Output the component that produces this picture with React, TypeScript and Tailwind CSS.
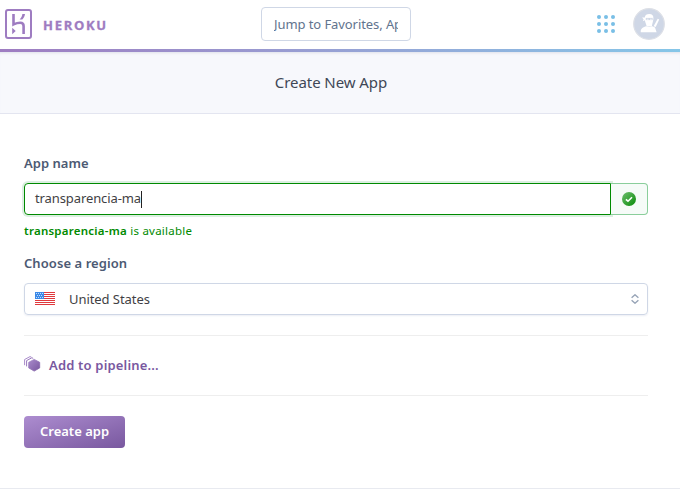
import React from "react";

const DOTS = [0, 1, 2, 3, 4, 5, 6, 7, 8];

function HerokuMark() {
  return (
    <svg width="27" height="30" viewBox="0 0 27 30" fill="none" stroke="#9e7cc1">
      <rect x="1" y="1" width="25" height="28" rx="2" strokeWidth="2" />
      <path d="M8.5 5V15.4C10.8 14.4 13.2 13.8 15.3 13.8C18 13.8 18.6 15.3 18.6 17V25" strokeWidth="2.6" />
      <path d="M7.2 18.7L10.7 21.9L7.2 25.2Z" fill="#9e7cc1" stroke="none" />
      <path d="M17.4 5H20C19.8 7 18.8 8.9 17.3 10.6H14.6C16.2 8.9 17.1 7.1 17.4 5Z" fill="#9e7cc1" stroke="none" />
    </svg>
  );
}

function Avatar() {
  return (
    <svg width="32" height="32" viewBox="0 0 32 32">
      <circle cx="16" cy="16" r="15.3" fill="#cfd7e6" stroke="#dcdfe6" strokeWidth="1.2" />
      <path d="M11.8 9.4C12.2 6.9 13.7 6 16.2 6C19.4 6 20.6 7.6 20.4 10.6C20.2 13.6 19.2 15.6 18.8 18.6H13.6C13.6 16.6 12.3 14.8 11.8 12.2L9.8 13.2L10.6 11.2L9 9.6Z" fill="#fff" />
      <path d="M12.8 9.9H19.6V12.1H12.8Z" fill="#cfd7e6" />
      <path d="M13.6 11.2H15.6M16.9 11.2H18.9" stroke="#fff" strokeWidth="0.8" />
      <path d="M7.8 24.3C7.4 20.7 9.4 19.4 13 18.2L16.2 19L19.4 18.2L22 19.6L23.6 24.3Z" fill="#fff" />
      <path d="M20.6 18.2L24.7 10.8L26.2 11.6L22.7 19.1Z" fill="#fff" />
    </svg>
  );
}

function Flag() {
  return (
    <svg width="20" height="13" viewBox="0 0 20 13">
      <rect width="20" height="13" rx="1" fill="#ffffff" />
      <path d="M0 0.5H20M0 2.5H20M0 4.5H20M0 6.5H20M0 8.5H20M0 10.5H20M0 12.5H20" stroke="#e0393e" strokeWidth="1.1" />
      <rect width="9" height="7" fill="#3c8ae8" />
      <path d="M1 1.5H8M2 3.5H8M1 5.5H8" stroke="#c5defa" strokeWidth="1" strokeDasharray="1 1" />
    </svg>
  );
}

function PipelineIcon() {
  return (
    <svg width="17" height="16" viewBox="0 0 17 16" fill="none">
      <defs>
        <linearGradient id="hex" x1="0" y1="0" x2="1" y2="1">
          <stop stopColor="#a98bcb" />
          <stop offset="1" stopColor="#79589f" />
        </linearGradient>
      </defs>
      <path d="M10.2 3.4L15.7 6.3V11.9L10.2 15.1L4.7 11.9V6.3Z" fill="url(#hex)" stroke="url(#hex)" strokeWidth="0.8" strokeLinejoin="round" />
      <path d="M0.6 9.2V3.5L6 0.6L7.4 1.2" stroke="#a98bcb" />
      <path d="M2.6 10.4V4.6L7.8 1.8L9.2 2.3" stroke="#9979bd" />
    </svg>
  );
}

export default function App() {
  return (
    <div className="h-[491px] w-[680px] overflow-hidden bg-white font-['Noto_Sans',sans-serif] text-[13px] text-[#3f3f44]">
      <header className="flex h-[49px] items-center pr-[15px] pb-px pl-[5px]">
        <div className="flex w-[256px] items-center gap-[11px]">
          <HerokuMark />
          <span className="pt-[3px] font-['Open_Sans',sans-serif] text-[13px] font-bold tracking-[1.7px] text-[#9e7cc1] [-webkit-text-stroke:0.3px_#9e7cc1]">
            HEROKU
          </span>
        </div>
        <div className="flex h-[34px] w-[150px] items-center rounded-[4px] border border-[#cfd7e6] px-3">
          <input
            className="w-full min-w-0 bg-transparent p-0 pt-0.5 text-[13px] tracking-[-0.08px] outline-none placeholder:text-[#62748e]"
            placeholder="Jump to Favorites, Apps"
          />
        </div>
        <div className="ml-auto flex items-center gap-[18px]">
          <div className="grid grid-cols-3 gap-[3px]">
            {DOTS.map((d) => (
              <span key={d} className="size-1 rounded-full bg-[#79bfe6]" />
            ))}
          </div>
          <Avatar />
        </div>
      </header>
      <div className="h-[3px] bg-linear-to-r from-[#9e7cc1] to-[#85c6e8]" />
      <div className="flex h-[62px] items-center justify-center border-b border-[#e3e5f0] bg-[#f7f8fc] pr-[18px] shadow-[inset_0_3px_3px_-2px_#dfe1e9]">
        <h1 className="text-[15px] tracking-[-0.07px] text-[#3f4756]">Create New App</h1>
      </div>

      <main className="mr-8 ml-6 flex flex-col pt-[39px]">
        <label className="h-5 text-[13px] leading-5 font-semibold tracking-[0.03px] text-[#4c5a73]">App name</label>
        <div className="mt-[10px] flex h-8">
          <div className="flex w-[587px] items-center rounded-l-[4px] border border-[#008a00] pl-[10px] shadow-[0_0_0_2px_#dcefe1]">
            <span className="tracking-[-0.1px]">transparencia-ma</span>
            <span className="h-[17px] w-px bg-[#222]" />
          </div>
          <div className="flex flex-1 items-center justify-center rounded-r-[4px] border border-l-0 border-[#8ace9b] bg-[#f6fbf8]">
            <svg width="14" height="14" viewBox="0 0 14 14">
              <defs>
                <linearGradient id="ok" x1="0" y1="0" x2="1" y2="1">
                  <stop stopColor="#6fbe6f" />
                  <stop offset="1" stopColor="#078a07" />
                </linearGradient>
              </defs>
              <circle cx="7" cy="7" r="7" fill="url(#ok)" />
              <path d="M3.9 7.3L6 9.2L10 5.3" fill="none" stroke="#fff" strokeWidth="1.6" />
            </svg>
          </div>
        </div>
        <p className="mt-[5px] h-5 text-[11.5px] leading-[21px] tracking-[0.24px] text-[#008a00]">
          <b className="font-semibold">transparencia-ma</b> is available
        </p>
        <label className="mt-[13px] h-5 text-[13px] leading-5 font-semibold tracking-[0.07px] text-[#4c5a73]">Choose a region</label>
        <div className="mt-[10px] flex h-8 items-center rounded-[4px] border border-[#cfd7e6] pr-2 pl-[10px] shadow-[0_1px_2px_#eceef4]">
          <span className="pb-px">
            <Flag />
          </span>
          <span className="ml-[14px] pt-px tracking-[-0.06px]">United States</span>
          <svg className="ml-auto" width="8" height="10" viewBox="0 0 8 10" fill="none" stroke="#96a3b6" strokeWidth="1.4">
            <path d="M0.6 3.8L4 0.8L7.4 3.8M0.6 6.2L4 9.2L7.4 6.2" />
          </svg>
        </div>
        <div className="mt-5 flex h-[61px] items-center gap-2 border-y border-[#eeeeee]">
          <span className="pb-1">
            <PipelineIcon />
          </span>
          <span className="font-semibold tracking-[0.18px] text-[#79589f]">Add to pipeline...</span>
        </div>
        <button className="mt-5 h-8 w-[101px] rounded-[4px] bg-linear-to-br from-[#ad8dd0] to-[#79589f] text-[13px] font-semibold text-white">
          Create app
        </button>
      </main>
      <div className="mt-10 h-px bg-[#e8eaf0]" />
    </div>
  );
}
